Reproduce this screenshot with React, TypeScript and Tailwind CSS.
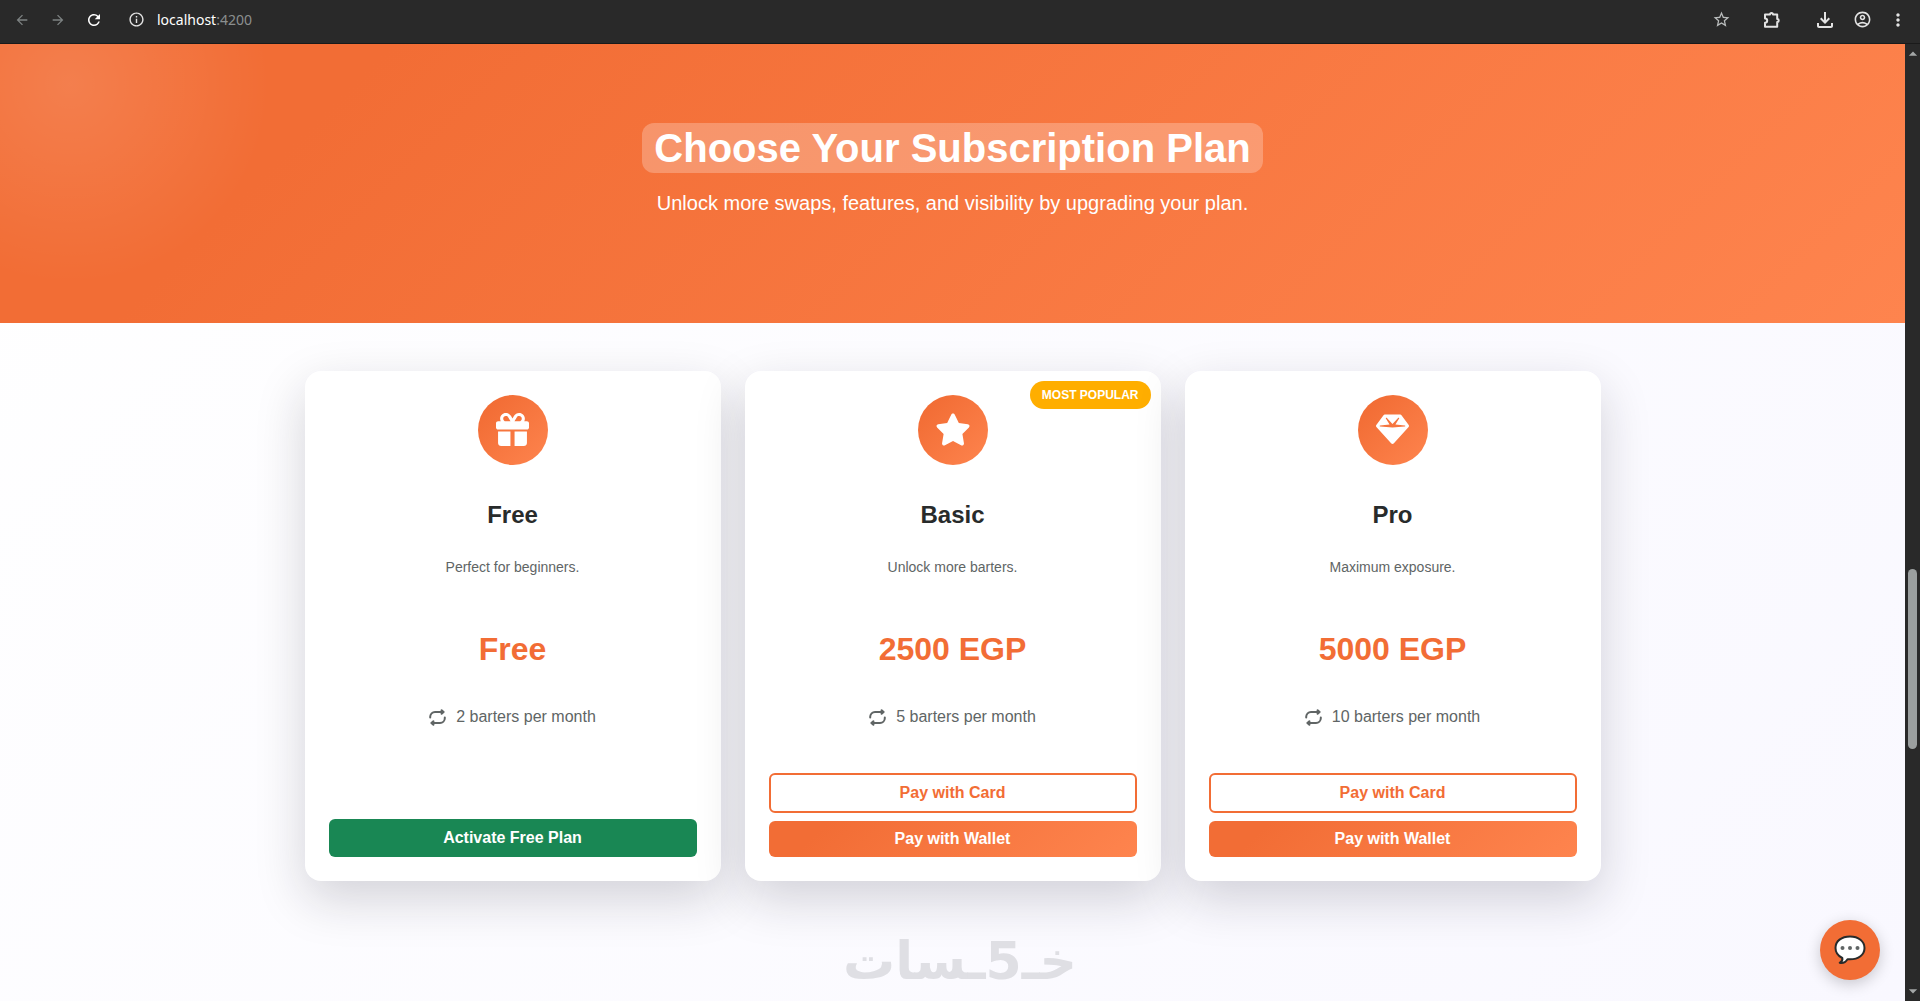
import React from "react";
import {
  MdArrowBack,
  MdArrowForward,
  MdArrowDropDown,
  MdArrowDropUp,
  MdInfoOutline,
  MdMoreVert,
  MdOutlineAccountCircle,
  MdOutlineFileDownload,
  MdRefresh,
  MdStarOutline,
} from "react-icons/md";
import { FaGem, FaGift, FaStar } from "react-icons/fa6";
import type { IconType } from "react-icons";

interface Plan {
  name: string;
  description: string;
  price: string;
  barters: number;
  icon: IconType;
  popular?: boolean;
  free?: boolean;
}

const plans: Plan[] = [
  { name: "Free", description: "Perfect for beginners.", price: "Free", barters: 2, icon: FaGift, free: true },
  { name: "Basic", description: "Unlock more barters.", price: "2500 EGP", barters: 5, icon: FaStar, popular: true },
  { name: "Pro", description: "Maximum exposure.", price: "5000 EGP", barters: 10, icon: FaGem },
];

function PuzzleIcon() {
  return (
    <svg width="18" height="18" viewBox="0 0 18 18" fill="none" stroke="currentColor" strokeWidth="2" strokeLinejoin="round">
      <path d="M2 3.500h5a1.500 1.500 0 0 1 3 0h4.200v4.500a1.500 1.500 0 0 1 0 3v4.700H2v-3.900a2.200 2.200 0 0 0 0-4.400z" />
    </svg>
  );
}

function RepeatIcon() {
  return (
    <svg width="17" height="17" viewBox="0 0 17 17" fill="none" stroke="currentColor" strokeWidth="2" strokeLinecap="round" strokeLinejoin="round">
      <path d="M1.200 8.500V7.800A4.800 4.800 0 0 1 6 3H13" />
      <path d="M15.800 8.500v.7A4.800 4.800 0 0 1 11 14H4" />
      <path d="M12.600 1.200 14.600 3l-2 1.800zM4.400 12.200 2.400 14l2 1.800z" fill="currentColor" />
    </svg>
  );
}

function BrowserBar() {
  return (
    <header className="flex h-11 shrink-0 items-center justify-between border-b border-[#1a1a1a] bg-[#292929] pr-3 pl-3 pb-1 text-[#e3e3e3]">
      <div className="flex items-center">
        <button aria-label="Back" className="mr-4 p-0.5 text-[#7d8282]">
          <MdArrowBack size={16} />
        </button>
        <button aria-label="Forward" className="mr-4 p-0.5 text-[#7d8282]">
          <MdArrowForward size={16} />
        </button>
        <button aria-label="Reload" className="mr-6 p-px text-white">
          <MdRefresh size={18} />
        </button>
        <button aria-label="Site information" className="mr-3">
          <MdInfoOutline size={17} />
        </button>
        <span className="font-['Noto_Sans',sans-serif] text-sm text-white">
          localhost<span className="text-[#8b8f8f]">:4200</span>
        </span>
      </div>
      <div className="flex items-center">
        <button aria-label="Bookmark this page" className="mr-8 text-[#b9bcbc]">
          <MdStarOutline size={19} />
        </button>
        <button aria-label="Extensions" className="mr-8">
          <PuzzleIcon />
        </button>
        <button aria-label="Downloads" className="mr-4">
          <MdOutlineFileDownload size={24} />
        </button>
        <button aria-label="Profile" className="mr-4">
          <MdOutlineAccountCircle size={19} />
        </button>
        <button aria-label="Menu">
          <MdMoreVert size={20} />
        </button>
      </div>
    </header>
  );
}

function Hero() {
  return (
    <section className="bg-[radial-gradient(circle_at_70px_40px,rgba(255,255,255,0.12),transparent_200px),linear-gradient(135deg,#f26d35_18%,#fe844e)] px-6 pt-[79px] pb-[105px] text-center text-white">
      <h1 className="inline-block rounded-xl bg-white/25 px-3 py-px text-[40px] leading-12 font-bold">
        Choose Your Subscription Plan
      </h1>
      <p className="mt-[15px] text-xl leading-[30px]">
        Unlock more swaps, features, and visibility by upgrading your plan.
      </p>
    </section>
  );
}

function PlanCard({ plan }: { plan: Plan }) {
  const Icon = plan.icon;
  return (
    <article className="relative flex min-h-[510px] flex-col items-center rounded-2xl bg-white p-6 text-center shadow-[0_18px_50px_rgba(20,20,40,0.18)]">
      {plan.popular && (
        <span className="absolute top-2.5 right-2.5 rounded-full bg-[#ffae00] px-3 py-[5px] text-xs leading-[18px] font-bold text-white">
          MOST POPULAR
        </span>
      )}
      <div className="flex size-[70px] items-center justify-center rounded-full bg-[linear-gradient(135deg,#f26d35_15%,#fe844e)] pb-0.5 text-white">
        <Icon className={plan.popular ? "h-[33px] w-9" : "size-[33px]"} />
      </div>
      <h2 className="mt-8 text-2xl leading-9 font-bold text-[#282b2b]">{plan.name}</h2>
      <p className="mt-6 text-sm leading-5 text-[#606565]">{plan.description}</p>
      <p className="mt-12 text-[32px] leading-12 font-bold text-[#f26d35]">{plan.price}</p>
      <p className="mt-8 flex items-center gap-2.5 text-base leading-6 text-[#606565]">
        <RepeatIcon />
        {plan.barters} barters per month
      </p>
      <div className="mt-auto flex w-full flex-col gap-2 text-base leading-6 font-bold">
        {plan.free ? (
          <button className="rounded-md bg-[#198754] py-[7px] text-white">Activate Free Plan</button>
        ) : (
          <>
            <button className="rounded-md border-2 border-[#f26d35] py-1.5 text-[#f26d35]">Pay with Card</button>
            <button className="rounded-md bg-[linear-gradient(135deg,#f26d35_15%,#fe844e)] py-1.5 text-white">
              Pay with Wallet
            </button>
          </>
        )}
      </div>
    </article>
  );
}

function ChatButton() {
  return (
    <button
      aria-label="Open chat"
      className="absolute right-[25px] bottom-[21px] flex size-[60px] items-center justify-center rounded-full bg-[#f26d35] shadow-[0_4px_15px_rgba(0,0,0,0.2)]"
    >
      <svg width="32" height="30" viewBox="0 0 32 30">
        <path
          d="M16 1.5C7.500 1.500 1.500 6 1.500 13c0 4.600 2.700 8 6.800 10 .5 1.800-.6 3.600-2.600 4.800 3.200.6 6.200-1 7.800-3.600l2.500.1c8.500 0 14.500-4.500 14.500-11.300S24.500 1.500 16 1.500z"
          fill="#fff"
          stroke="#282b2b"
          strokeWidth="2"
          strokeLinejoin="round"
        />
        <circle cx="8.500" cy="13" r="2" fill="#606565" />
        <circle cx="16" cy="13" r="2" fill="#606565" />
        <circle cx="23.500" cy="13" r="2" fill="#606565" />
      </svg>
    </button>
  );
}

function ScrollRail() {
  return (
    <div aria-hidden="true" className="flex w-[15px] shrink-0 flex-col items-center bg-[#292929] text-[#a3a6a6]">
      <MdArrowDropUp size={20} className="-mx-1 shrink-0" />
      <div className="grow-[505]" />
      <div className="h-[180px] w-[9px] rounded-full bg-[#9b9f9f]" />
      <div className="grow-[232]" />
      <MdArrowDropDown size={20} className="-mx-1 shrink-0" />
    </div>
  );
}

export default function App() {
  return (
    <div className="relative flex h-screen flex-col overflow-hidden font-['Liberation_Sans',Arial,sans-serif]">
      <BrowserBar />
      <div className="flex min-h-0 flex-1">
        <main className="relative min-w-0 flex-1 overflow-hidden bg-linear-135 from-white to-[#f9f8ff]">
          <Hero />
          <section className="mx-auto grid max-w-[1320px] grid-cols-3 gap-6 px-3 pt-12 pb-12">
            {plans.map((plan) => (
              <PlanCard key={plan.name} plan={plan} />
            ))}
          </section>
          <ChatButton />
        </main>
        <ScrollRail />
      </div>

      {/* Watermark */}
      <div
        dir="rtl"
        lang="ar"
        className="pointer-events-none absolute inset-x-0 bottom-0 text-center font-['DejaVu_Sans',sans-serif] text-[52px] leading-20 font-bold text-[#dfdfe4]"
      >
        خـ5ـسات
      </div>
    </div>
  );
}
